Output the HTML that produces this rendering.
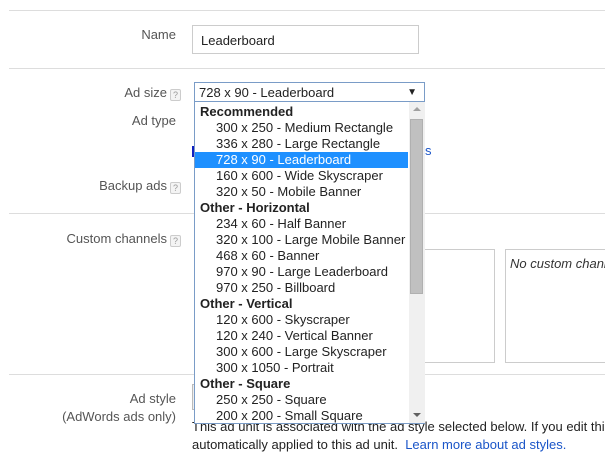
<!DOCTYPE html>
<html><head><meta charset="utf-8"><style>
*{margin:0;padding:0;box-sizing:border-box}
body{width:605px;height:457px;overflow:hidden;background:#fff;font-family:"Liberation Sans",Arial,sans-serif;font-size:13px;color:#222;position:relative}
.a{position:absolute}
.hr{position:absolute;left:9px;right:0;height:1px;background:#ddd}
.lbl{position:absolute;color:#555;text-align:right;white-space:nowrap}
.q{display:inline-block;width:11px;height:12px;border:1px solid #ccc;border-radius:2px;font-size:9px;line-height:10px;text-align:center;color:#999;vertical-align:-1px;margin-left:3px;background:#f4f4f4}
.list{position:absolute;left:194px;top:102px;width:231px;height:322px;border:1px solid #7a9cc7;border-top:none;background:#fff;padding-top:2px}
.it{height:16px;line-height:16px;padding-left:21px;white-space:nowrap;width:213px}
.h{padding-left:5px;font-weight:bold}
.sel{background:#1e90ff;color:#fff}
</style></head><body>
<div class="hr" style="top:10px"></div>
<div class="hr" style="top:68px"></div>
<div class="hr" style="top:213px"></div>
<div class="hr" style="top:374px"></div>

<div class="lbl" style="right:429px;top:27px">Name</div>
<div class="a" style="left:192px;top:25px;width:227px;height:29px;border:1px solid #ccc;padding:7px 8px;color:#222">Leaderboard</div>

<div class="lbl" style="right:424px;top:85px">Ad size<span class="q">?</span></div>
<div class="lbl" style="right:429px;top:113px">Ad type</div>
<div class="a" style="left:192px;top:146px;width:3px;height:11px;background:#1020c0"></div>
<div class="a" style="left:425px;top:143px;color:#1a55c8">s</div>
<div class="lbl" style="right:424px;top:178px">Backup ads<span class="q">?</span></div>
<div class="lbl" style="right:424px;top:231px">Custom channels<span class="q">?</span></div>

<div class="a" style="left:300px;top:249px;width:195px;height:114px;border:1px solid #ccc"></div>
<div class="a" style="left:505px;top:249px;width:110px;height:114px;border:1px solid #ccc;padding:6px 4px;font-style:italic;white-space:nowrap;color:#333">No custom channels</div>

<div class="lbl" style="right:429px;top:391px">Ad style</div>
<div class="lbl" style="right:429px;top:409px">(AdWords ads only)</div>
<div class="a" style="left:192px;top:384px;width:40px;height:26px;background:#eee;border:1px solid #bbb"></div>
<div class="a" style="left:192px;top:419px;white-space:nowrap">This ad unit is associated with the ad style selected below. If you edit this</div>
<div class="a" style="left:192px;top:437px;white-space:nowrap">automatically applied to this ad unit.&nbsp; <span style="color:#1a55c8">Learn more about ad styles.</span></div>

<div class="a" style="left:194px;top:82px;width:231px;height:20px;border:1px solid #7a9cc7;background:#fff;padding:2px 4px;line-height:15px">728 x 90 - Leaderboard<span style="position:absolute;right:7px;top:2px;font-size:10px">▼</span></div>
<div class="list">
<div class="it h">Recommended</div>
<div class="it">300 x 250 - Medium Rectangle</div>
<div class="it">336 x 280 - Large Rectangle</div>
<div class="it sel">728 x 90 - Leaderboard</div>
<div class="it">160 x 600 - Wide Skyscraper</div>
<div class="it">320 x 50 - Mobile Banner</div>
<div class="it h">Other - Horizontal</div>
<div class="it">234 x 60 - Half Banner</div>
<div class="it">320 x 100 - Large Mobile Banner</div>
<div class="it">468 x 60 - Banner</div>
<div class="it">970 x 90 - Large Leaderboard</div>
<div class="it">970 x 250 - Billboard</div>
<div class="it h">Other - Vertical</div>
<div class="it">120 x 600 - Skyscraper</div>
<div class="it">120 x 240 - Vertical Banner</div>
<div class="it">300 x 600 - Large Skyscraper</div>
<div class="it">300 x 1050 - Portrait</div>
<div class="it h">Other - Square</div>
<div class="it">250 x 250 - Square</div>
<div class="it">200 x 200 - Small Square</div>
<div class="a" style="left:214px;top:0;width:16px;height:321px;background:#f0f0f0">
<div class="a" style="left:4px;top:5px;width:0;height:0;border-left:4px solid transparent;border-right:4px solid transparent;border-bottom:4px solid #a0a0a0"></div>
<div class="a" style="left:1px;top:17px;width:13px;height:175px;background:#c0c0c0;border:1px solid #b0b0b0"></div>
<div class="a" style="left:4px;top:311px;width:0;height:0;border-left:4px solid transparent;border-right:4px solid transparent;border-top:4px solid #606060"></div>
</div>
</div>
</body></html>
